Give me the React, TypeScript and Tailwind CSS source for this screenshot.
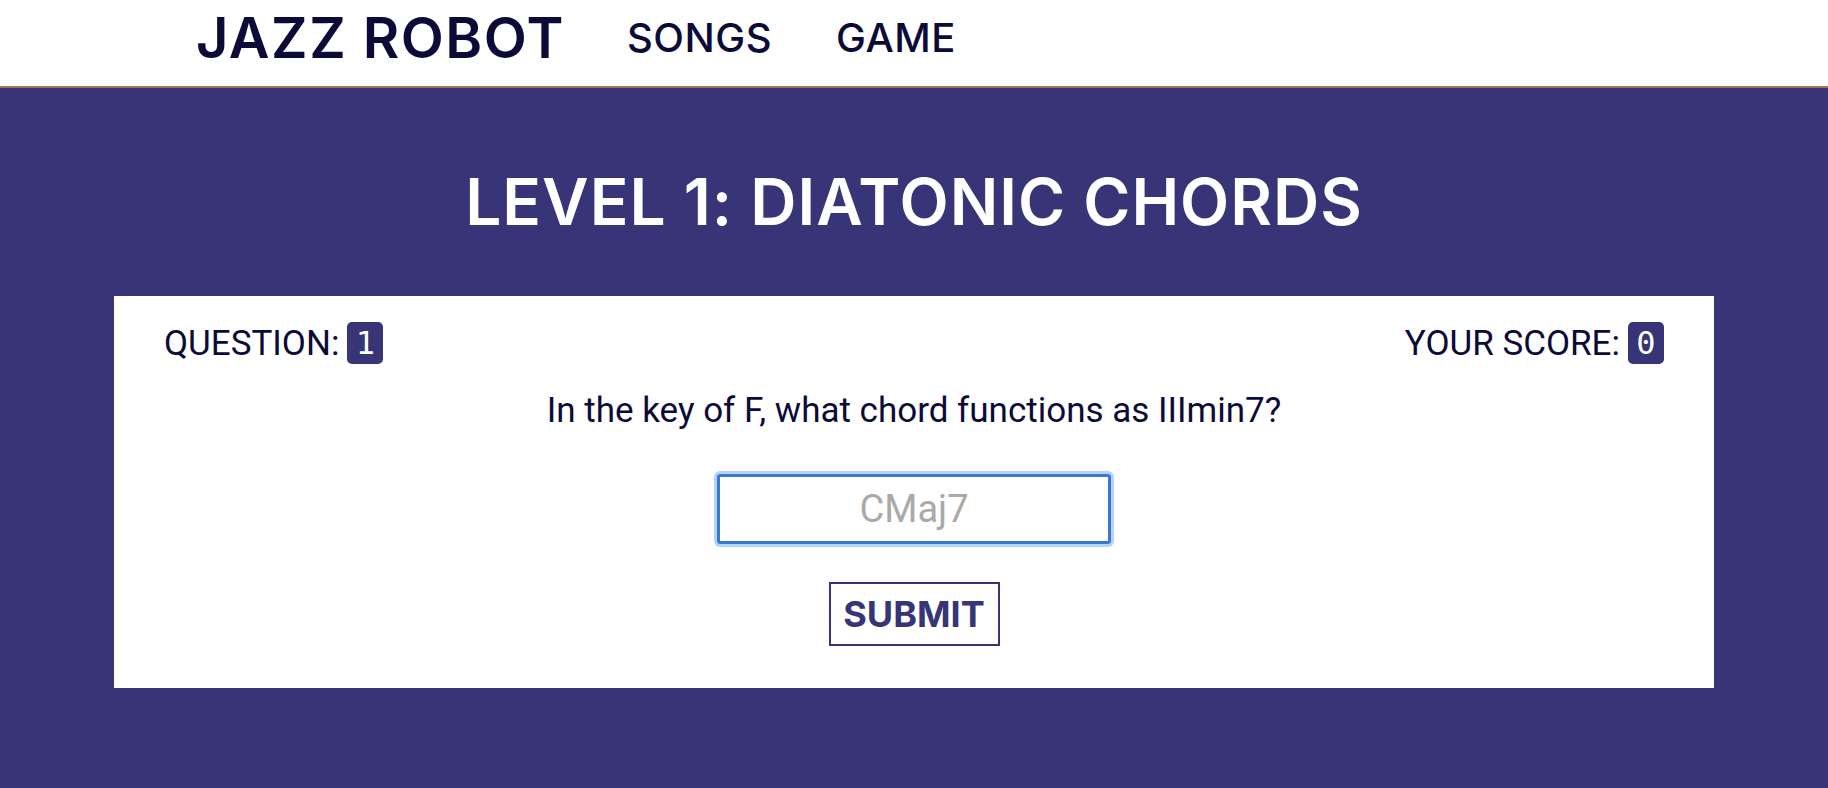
import React from "react";

export default function App() {
  return (
    <div className="min-h-[788px] w-full bg-[#373477] flex flex-col">
      <header className="h-[88px] bg-white border-b-2 border-[#a07850] flex items-center pl-[196px] pb-[10px] text-[#0c0a36] font-['Inter','DejaVu_Sans',sans-serif]">
        <div className="text-[56px] leading-none font-semibold tracking-[1.5px]">JAZZ ROBOT</div>
        <nav className="flex items-center ml-[62px] gap-[64px] text-[40px] leading-none font-medium tracking-[0.5px]">
          <span>SONGS</span>
          <span>GAME</span>
        </nav>
      </header>

      <main className="flex flex-col items-center">
        <h1 className="mt-[82px] text-[64px] leading-none font-semibold text-white tracking-[1px] font-['Inter','DejaVu_Sans',sans-serif]">
          LEVEL 1: DIATONIC CHORDS
        </h1>

        <section className="self-stretch mx-[114px] mt-[62px] h-[392px] bg-white px-[50px] pt-[26px] flex flex-col items-center text-[#0c0a36] font-['Roboto','Noto_Sans',sans-serif]">
          <div className="self-stretch flex items-center justify-between h-[42px]">
            <div className="flex items-center text-[35px] leading-none">
              <span>QUESTION:</span>
              <span className="ml-[8px] h-[42px] w-[36px] justify-center rounded-[5px] bg-[#373477] text-white text-[32px] flex items-center font-['DejaVu_Sans_Mono','Liberation_Mono',monospace]">
                1
              </span>
            </div>
            <div className="flex items-center text-[35px] leading-none">
              <span>YOUR SCORE:</span>
              <span className="ml-[8px] h-[42px] w-[36px] justify-center rounded-[5px] bg-[#373477] text-white text-[32px] flex items-center font-['DejaVu_Sans_Mono','Liberation_Mono',monospace]">
                0
              </span>
            </div>
          </div>

          <p className="mt-[27px] text-[35px] leading-[40px]">
            In the key of F, what chord functions as IIImin7?
          </p>

          <input
            placeholder="CMaj7"
            className="mt-[43px] w-[394px] h-[70px] border-[3px] border-[#3a78d4] rounded-[3px] shadow-[0_0_0_3px_#b4d4f7] text-center text-[38px] placeholder:text-[#a9a9a9] outline-none font-['Roboto','Noto_Sans',sans-serif]"
          />

          <button className="mt-[38px] w-[171px] h-[64px] border-2 border-[#373477] text-[#373477] text-[36px] font-bold leading-none font-['Inter','DejaVu_Sans',sans-serif]">
            SUBMIT
          </button>
        </section>
      </main>
    </div>
  );
}
